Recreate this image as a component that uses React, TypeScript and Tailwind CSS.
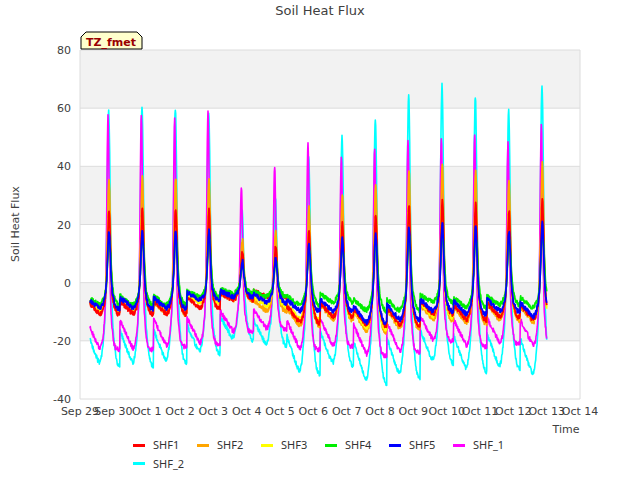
import React from "react";

const X0 = 80, X1 = 580, Y0 = 50, Y1 = 399;
const dx = (X1 - X0) / 15;
const xs = (t: number) => X0 + t * dx;
const ys = (v: number) => Y0 + ((80 - v) / 120) * (Y1 - Y0);

function rnd(i: number) {
  const s = Math.sin(i * 12.9898) * 43758.5453;
  return s - Math.floor(s);
}

type S = { name: string; color: string; peaks: number[]; mins: number[]; w: number; lag: number };

const P2 = [59, 60, 60, 59, 25, 29, 43, 50, 56, 64, 68, 64, 59, 68];
const P1 = [57, 58, 56, 59, 33, 40, 48, 43, 46, 49, 50, 51, 48, 54];
const M2 = [-29, -28, -25, -20, -22, -32, -29, -35, -33, -28, -31, -30, -33, -31];
const M1 = [-23, -22, -21, -17, -16, -23, -22, -25, -24, -20, -22, -21, -22, -22];
const scale = (a: number[], k: number, c = 0) => a.map((v) => v * k + c);

const series: S[] = [
  { name: "SHF1", color: "#ff0000", peaks: scale(P2, 0.42), mins: [-11, -11, -9, -6, -5, -14, -12, -15, -15, -11, -13, -12, -13, -11], w: 0.06, lag: 0.02 },
  { name: "SHF2", color: "#ffa500", peaks: scale(P2, 0.6), mins: [-10, -11, -7, -6, -10, -15, -13, -17, -16, -13, -14, -13, -14, -13], w: 0.06, lag: 0.02 },
  { name: "SHF3", color: "#ffff00", peaks: scale(P2, 0.38), mins: [-10, -10, -7, -5, -8, -13, -12, -16, -15, -12, -13, -12, -13, -12], w: 0.06, lag: 0.01 },
  { name: "SHF4", color: "#00ee00", peaks: scale(P2, 0.25), mins: [-8, -8, -5, -4, -5, -8, -7, -10, -10, -7, -9, -8, -9, -7], w: 0.07, lag: 0.03 },
  { name: "SHF5", color: "#0000ff", peaks: scale(P2, 0.3), mins: [-9, -9, -6, -5, -7, -10, -10, -14, -13, -10, -11, -10, -12, -10], w: 0.06, lag: 0.02 },
  { name: "SHF_1", color: "#ff00ff", peaks: P1, mins: M1, w: 0.05, lag: -0.01 },
  { name: "SHF_2", color: "#00ffff", peaks: P2, mins: M2, w: 0.065, lag: 0.01 },
];

function path(s: S, si: number) {
  const pts: string[] = [];
  for (let t = 0.3; t <= 14.0; t += 0.01) {
    const d = Math.floor(t - 0.2);
    const di = Math.max(0, Math.min(13, d));
    const pk = d + 0.85 + s.lag;
    const prevIdx = Math.max(0, Math.min(13, d - 1));
    const since = t - (d - 1 + 0.85);
    const mn = s.mins[prevIdx];
    const b = mn * 0.35 + (mn - mn * 0.35) * Math.min(1, Math.max(0, (since - 0.15) / 0.6));
    const g = Math.exp(-Math.pow((t - pk) / s.w, 2));
    const g2 = Math.exp(-Math.pow((t - pk) / (s.w * 2.4), 2));
    let v = b * (1 - g2) + (s.peaks[di] * g + (1 - g) * s.mins[di] * 0.1) * g2;
    v += (rnd(Math.round(t * 100) + si * 1000) - 0.5) * 1.6;
    pts.push(`${xs(t).toFixed(1)},${ys(v).toFixed(1)}`);
  }
  return "M" + pts.join("L");
}

const xlabels = ["Sep 29", "Sep 30", "Oct 1", "Oct 2", "Oct 3", "Oct 4", "Oct 5", "Oct 6", "Oct 7", "Oct 8", "Oct 9", "Oct 10", "Oct 11", "Oct 12", "Oct 13", "Oct 14"];

function Legend({ s }: { s: S }) {
  return (
    <div className="flex items-center w-[64px]">
      <span className="inline-block w-[12px] h-[3px] mr-[8px]" style={{ background: s.color }} />
      {s.name}
    </div>
  );
}

export default function App() {
  return (
    <div className="w-[640px] h-[480px] bg-white relative overflow-hidden font-['DejaVu_Sans',sans-serif]">
      <svg width={640} height={480} className="absolute left-0 top-0" fontFamily="DejaVu Sans, sans-serif">
        <text x={320} y={15} textAnchor="middle" fontSize={13} fill="#404040">Soil Heat Flux</text>
        <rect x={X0} y={ys(80)} width={X1 - X0} height={ys(60) - ys(80)} fill="#f2f2f2" />
        <rect x={X0} y={ys(40)} width={X1 - X0} height={ys(20) - ys(40)} fill="#f2f2f2" />
        <rect x={X0} y={ys(0)} width={X1 - X0} height={ys(-20) - ys(0)} fill="#f2f2f2" />
        {[80, 60, 40, 20, 0, -20, -40].map((v) => (
          <g key={v}>
            <line x1={X0} x2={X1} y1={ys(v)} y2={ys(v)} stroke="#dcdcdc" />
            <text x={X0 - 9} y={ys(v) + 4} textAnchor="end" fontSize={11} fill="#404040">{v}</text>
          </g>
        ))}
        <line x1={X0} x2={X0} y1={Y0} y2={Y1} stroke="#dcdcdc" />
        <line x1={X1} x2={X1} y1={Y0} y2={Y1} stroke="#dcdcdc" />
        {xlabels.map((l, i) => (
          <text key={l} x={xs(i)} y={415} textAnchor="middle" fontSize={11} fill="#404040">{l}</text>
        ))}
        <text x={566} y={433} textAnchor="middle" fontSize={11} fill="#404040">Time</text>
        <text transform="translate(19,224) rotate(-90)" textAnchor="middle" fontSize={11} fill="#404040">Soil Heat Flux</text>
        <svg x={X0} y={Y0} width={X1 - X0} height={Y1 - Y0} viewBox={`${X0} ${Y0} ${X1 - X0} ${Y1 - Y0}`}>
          {[6, 5, 1, 2, 0, 3, 4].map((i) => (
            <path key={i} d={path(series[i], i)} fill="none" stroke={series[i].color} strokeWidth={i >= 5 ? 1.6 : 1.8} strokeLinejoin="round" />
          ))}
        </svg>
        <path d="M81,49 L81,37 L86,32 L137,32 L142,37 L142,49 Z" fill="#ffffcc" stroke="#000" />
        <text x={111} y={46} textAnchor="middle" fontSize={11} fontWeight="bold" fill="#990000">TZ_fmet</text>
      </svg>
      <div className="absolute left-[133px] top-[437px] flex flex-col gap-[2px] text-[11px] text-[#333]">
        <div className="flex">
          {series.slice(0, 6).map((s) => (
            <Legend key={s.name} s={s} />
          ))}
        </div>
        <div className="flex">
          <Legend s={series[6]} />
        </div>
      </div>
    </div>
  );
}
